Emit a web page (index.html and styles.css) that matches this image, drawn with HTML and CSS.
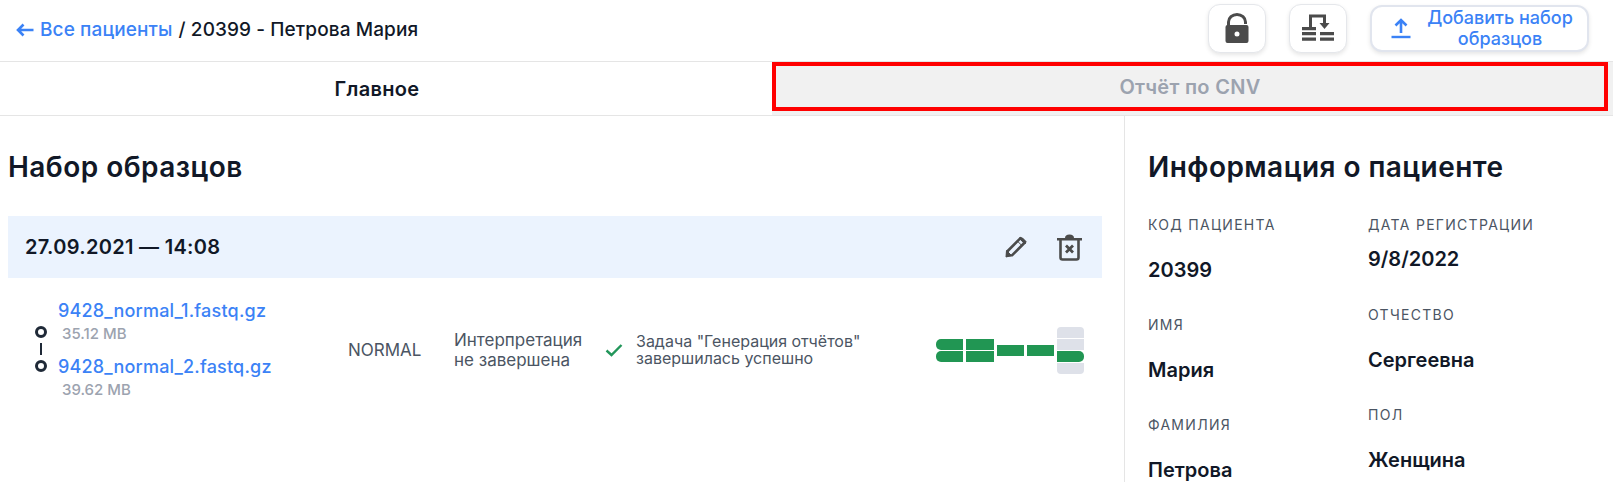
FILE: index.html
```html
<!DOCTYPE html>
<html lang="ru">
<head>
  <meta charset="UTF-8" />
  <title>Петрова Мария</title>
  <link rel="stylesheet" href="styles.css">
</head>
<body>
  <header class="topbar">
    <div class="crumbs">
      <svg class="back-icon" viewBox="0 0 18 14" width="18" height="14"><path d="M7.500 1.500 2 7l5.500 5.500M2.500 7H17.500" fill="none" stroke="#3b82f6" stroke-width="2.600"/></svg>
      <a class="link" href="#">Все пациенты</a>
      <span>/ 20399 - Петрова Мария</span>
    </div>
    <div class="actions">
      <button class="icon-btn" type="button">
        <svg viewBox="0 0 24 30" width="24" height="30"><path d="M3.500 13V9a8.500 7.500 0 0 1 17 0v2" fill="none" stroke="#4b4b4b" stroke-width="3"/><path fill-rule="evenodd" d="M2.500 12h19a2 2 0 0 1 2 2v14a2 2 0 0 1-2 2h-19a2 2 0 0 1-2-2V14a2 2 0 0 1 2-2zM12 18.500a2.500 2.500 0 1 0 0 5 2.500 2.500 0 0 0 0-5z" fill="#4b4b4b"/></svg>
      </button>
      <button class="icon-btn" type="button">
        <svg viewBox="0 0 32 28" width="32" height="28" fill="#4b4b4b"><path d="M8.500 13V2h14v8" fill="none" stroke="#4b4b4b" stroke-width="3"/><path d="M17.500 9h10L22.500 15z"/><path d="M0 13h14v3.200H0zM0 18h14v3.200H0zM0 23.500h14v3.200H0zM18 18h14v3.200H18zM18 23.500h14v3.200H18z"/></svg>
      </button>
      <button class="add-btn" type="button">
        <svg viewBox="0 0 20 24" width="20" height="24"><path d="M10 17V4M4.500 9.500 10 4l5.500 5.500" fill="none" stroke="#3b82f6" stroke-width="2.600"/><path d="M0.500 21h19" stroke="#3b82f6" stroke-width="2.400"/></svg>
        <span class="add-text">Добавить набор образцов</span>
      </button>
    </div>
  </header>

  <nav class="tabs">
    <div class="tab tab-main">Главное</div>
    <div class="tab tab-muted"><span class="tab-mark">Отчёт по CNV</span></div>
  </nav>

  <main class="content">
    <section class="samples">
      <h2>Набор образцов</h2>
      <div class="set-head">
        <span class="set-date">27.09.2021 — 14:08</span>
        <div class="set-tools">
          <svg viewBox="0 0 22 22" width="22" height="22"><path d="M15.500 2.200 19.800 6.500 7 19.300 2.500 19.500 2.700 15z" fill="none" stroke="#4b4b4b" stroke-width="2.600" stroke-linejoin="round"/><path d="M12.500 5.200l4.300 4.300M14 2l6 6 1-2.500-3.500-3.500zM1 21l.5-6.500 5 5z" fill="#4b4b4b" stroke="#4b4b4b" stroke-width="1"/></svg>
          <svg viewBox="0 0 25 27" width="25" height="27"><path fill="#4b4b4b" d="M0 4h8a4.500 3.500 0 0 1 9 0h8v2.600H0z"/><path d="M3.500 6v17.500a2 2 0 0 0 2 2h14a2 2 0 0 0 2-2V6" fill="none" stroke="#4b4b4b" stroke-width="2.600"/><path d="m9 11.500 7 7m0-7-7 7" stroke="#4b4b4b" stroke-width="2.800"/></svg>
        </div>
      </div>
      <div class="set-row">
        <div class="pair-icon"><i class="dot"></i><i class="dash"></i><i class="dot"></i></div>
        <div class="files">
          <a class="link" href="#">9428_normal_1.fastq.gz</a>
          <div class="size">35.12 MB</div>
          <a class="link file-second" href="#">9428_normal_2.fastq.gz</a>
          <div class="size">39.62 MB</div>
        </div>
        <div class="kind">NORMAL</div>
        <div class="interp">Интерпретация не завершена</div>
        <svg class="check" viewBox="0 0 18 14" width="18" height="14"><path d="M1.500 7.500 6.500 12 16.500 2" fill="none" stroke="#22965a" stroke-width="2.400"/></svg>
        <div class="task">Задача "Генерация отчётов"<br>завершилась успешно</div>
        <div class="track">
          <div class="track-col">
            <i class="cell ok round-left"></i><i class="cell ok round-left"></i>
          </div>
          <div class="track-col wide">
            <i class="cell ok"></i><i class="cell ok"></i>
          </div>
          <div class="track-col">
            <i class="cell ok"></i>
          </div>
          <div class="track-col">
            <i class="cell ok"></i>
          </div>
          <div class="track-col">
            <i class="cell idle round-top"></i><i class="cell idle"></i><i class="cell ok round-right"></i><i class="cell idle round-bottom"></i>
          </div>
        </div>
      </div>
    </section>

    <aside class="patient">
      <h2>Информация о пациенте</h2>
      <div class="patient-cols">
        <div class="patient-col">
          <div class="field-label">Код пациента</div>
          <div class="field-value">20399</div>
          <div class="field-label">Имя</div>
          <div class="field-value">Мария</div>
          <div class="field-label">Фамилия</div>
          <div class="field-value">Петрова</div>
        </div>
        <div class="patient-col col-right">
          <div class="field-label">Дата регистрации</div>
          <div class="field-value first-date">9/8/2022</div>
          <div class="field-label">Отчество</div>
          <div class="field-value">Сергеевна</div>
          <div class="field-label">Пол</div>
          <div class="field-value">Женщина</div>
        </div>
      </div>
    </aside>
  </main>
</body>
</html>
```

FILE: styles.css
```css
html, body { height: 100%; overflow: hidden; }
body { font-family: Inter, "Noto Sans", sans-serif; background: #fff; color: #111827; margin: 0; }
h2 { font-size: 28px; line-height: 36px; font-weight: 600; letter-spacing: 0.45px; margin: 0; }
.link { color: #3b82f6; text-decoration: none; font-weight: 500; }

.topbar { display: flex; justify-content: space-between; align-items: center; height: 61px; padding: 0 24px 0 16px; box-sizing: border-box; }
.crumbs { display: flex; align-items: center; font-size: 19px; font-weight: 500; gap: 6px; letter-spacing: 0.1px; padding-bottom: 2px; }
.actions { display: flex; align-items: center; gap: 23px; padding-bottom: 5px; }
.icon-btn { width: 58px; height: 49px; display: flex; align-items: center; justify-content: center; padding: 0; background: #fff; border: 1px solid #e5e7eb; border-radius: 12px; box-shadow: 0 2px 4px #0000001a; }
.add-btn { width: 219px; height: 47px; display: flex; align-items: center; padding: 0 12px 0 19px; gap: 14px; background: #fff; border: 2px solid #e1e5ee; border-radius: 12px; box-shadow: 0 2px 4px #0000001a; box-sizing: border-box; }
.add-text { flex: 1; color: #3b82f6; font: 500 18px/21px Inter, sans-serif; text-align: center; }

.tabs { display: flex; height: 55px; border-top: 1px solid #e5e5e5; border-bottom: 1px solid #e5e5e5; box-sizing: border-box; }
.tab { display: flex; align-items: center; justify-content: center; font-size: 20px; font-weight: 600; letter-spacing: 0.3px; }
.tab-main { width: 772px; padding-right: 18px; box-sizing: border-box; }
.tab-muted { flex: 1; background: #f1f1f1; color: #9ca3af; padding: 0 5px 4px 0; box-sizing: border-box; }
.tab-mark { flex: 1; height: 100%; display: flex; align-items: center; justify-content: center; border: 4px solid #f00; box-sizing: border-box; }

.content { display: flex; }
.samples { width: 1124px; padding: 33px 22px 0 8px; box-sizing: border-box; }
.set-head { display: flex; justify-content: space-between; align-items: center; height: 62px; margin-top: 31px; padding: 0 20px 0 17px; background: #ebf3fe; }
.set-date { font-size: 20px; font-weight: 600; letter-spacing: 0.3px; }
.set-tools { display: flex; align-items: center; gap: 30px; }

.set-row { display: flex; align-items: center; margin-top: 21px; }
.pair-icon { width: 58px; display: flex; flex-direction: column; align-items: center; align-self: flex-start; margin: 27px 0 0 -8px; padding-left: 24px; box-sizing: border-box; }
.pair-icon .dot { width: 6px; height: 6px; border: 3px solid #1f2937; border-radius: 50%; }
.pair-icon .dash { width: 2px; height: 12px; margin: 5px 0; background: #1f2937; }
.files { width: 290px; font-size: 18px; }
.files .link { display: block; line-height: 24px; letter-spacing: 0.2px; }
.file-second { margin-top: 10px; }
.size { color: #9ca3af; font-size: 15px; font-weight: 500; line-height: 22px; margin-left: 4px; }
.kind { width: 106px; color: #4b5563; font-size: 17px; }
.interp { width: 151px; color: #4b5563; font-size: 17px; line-height: 20px; }
.check { margin-right: 13px; }
.task { width: 300px; color: #4b5563; font-size: 16px; line-height: 17px; }
.track { display: flex; align-items: center; gap: 3px; }
.track-col { width: 27px; display: flex; flex-direction: column; gap: 1px; }
.track-col.wide { width: 28px; }
.cell { display: block; height: 11px; }
.ok { background: #219653; }
.idle { background: #dee1e9; }
.round-left { border-radius: 5px 0 0 5px; }
.round-right { border-radius: 0 5px 5px 0; }
.round-top { border-radius: 4px 4px 0 0; }
.round-bottom { border-radius: 0 0 4px 4px; }

.patient { flex: 1; padding: 33px 0 0 23px; border-left: 1px solid #e5e5e5; }
.patient-cols { display: flex; margin-top: 30px; }
.patient-col { width: 220px; }
.field-label { color: #4b5563; font-size: 14px; line-height: 20px; letter-spacing: 1.3px; text-transform: uppercase; }
.field-value { font-size: 20px; font-weight: 600; line-height: 24px; margin: 23px 0 33px; }
.field-value:last-child { margin-bottom: 0; }
.first-date { margin: 12px 0 34px; }
```
